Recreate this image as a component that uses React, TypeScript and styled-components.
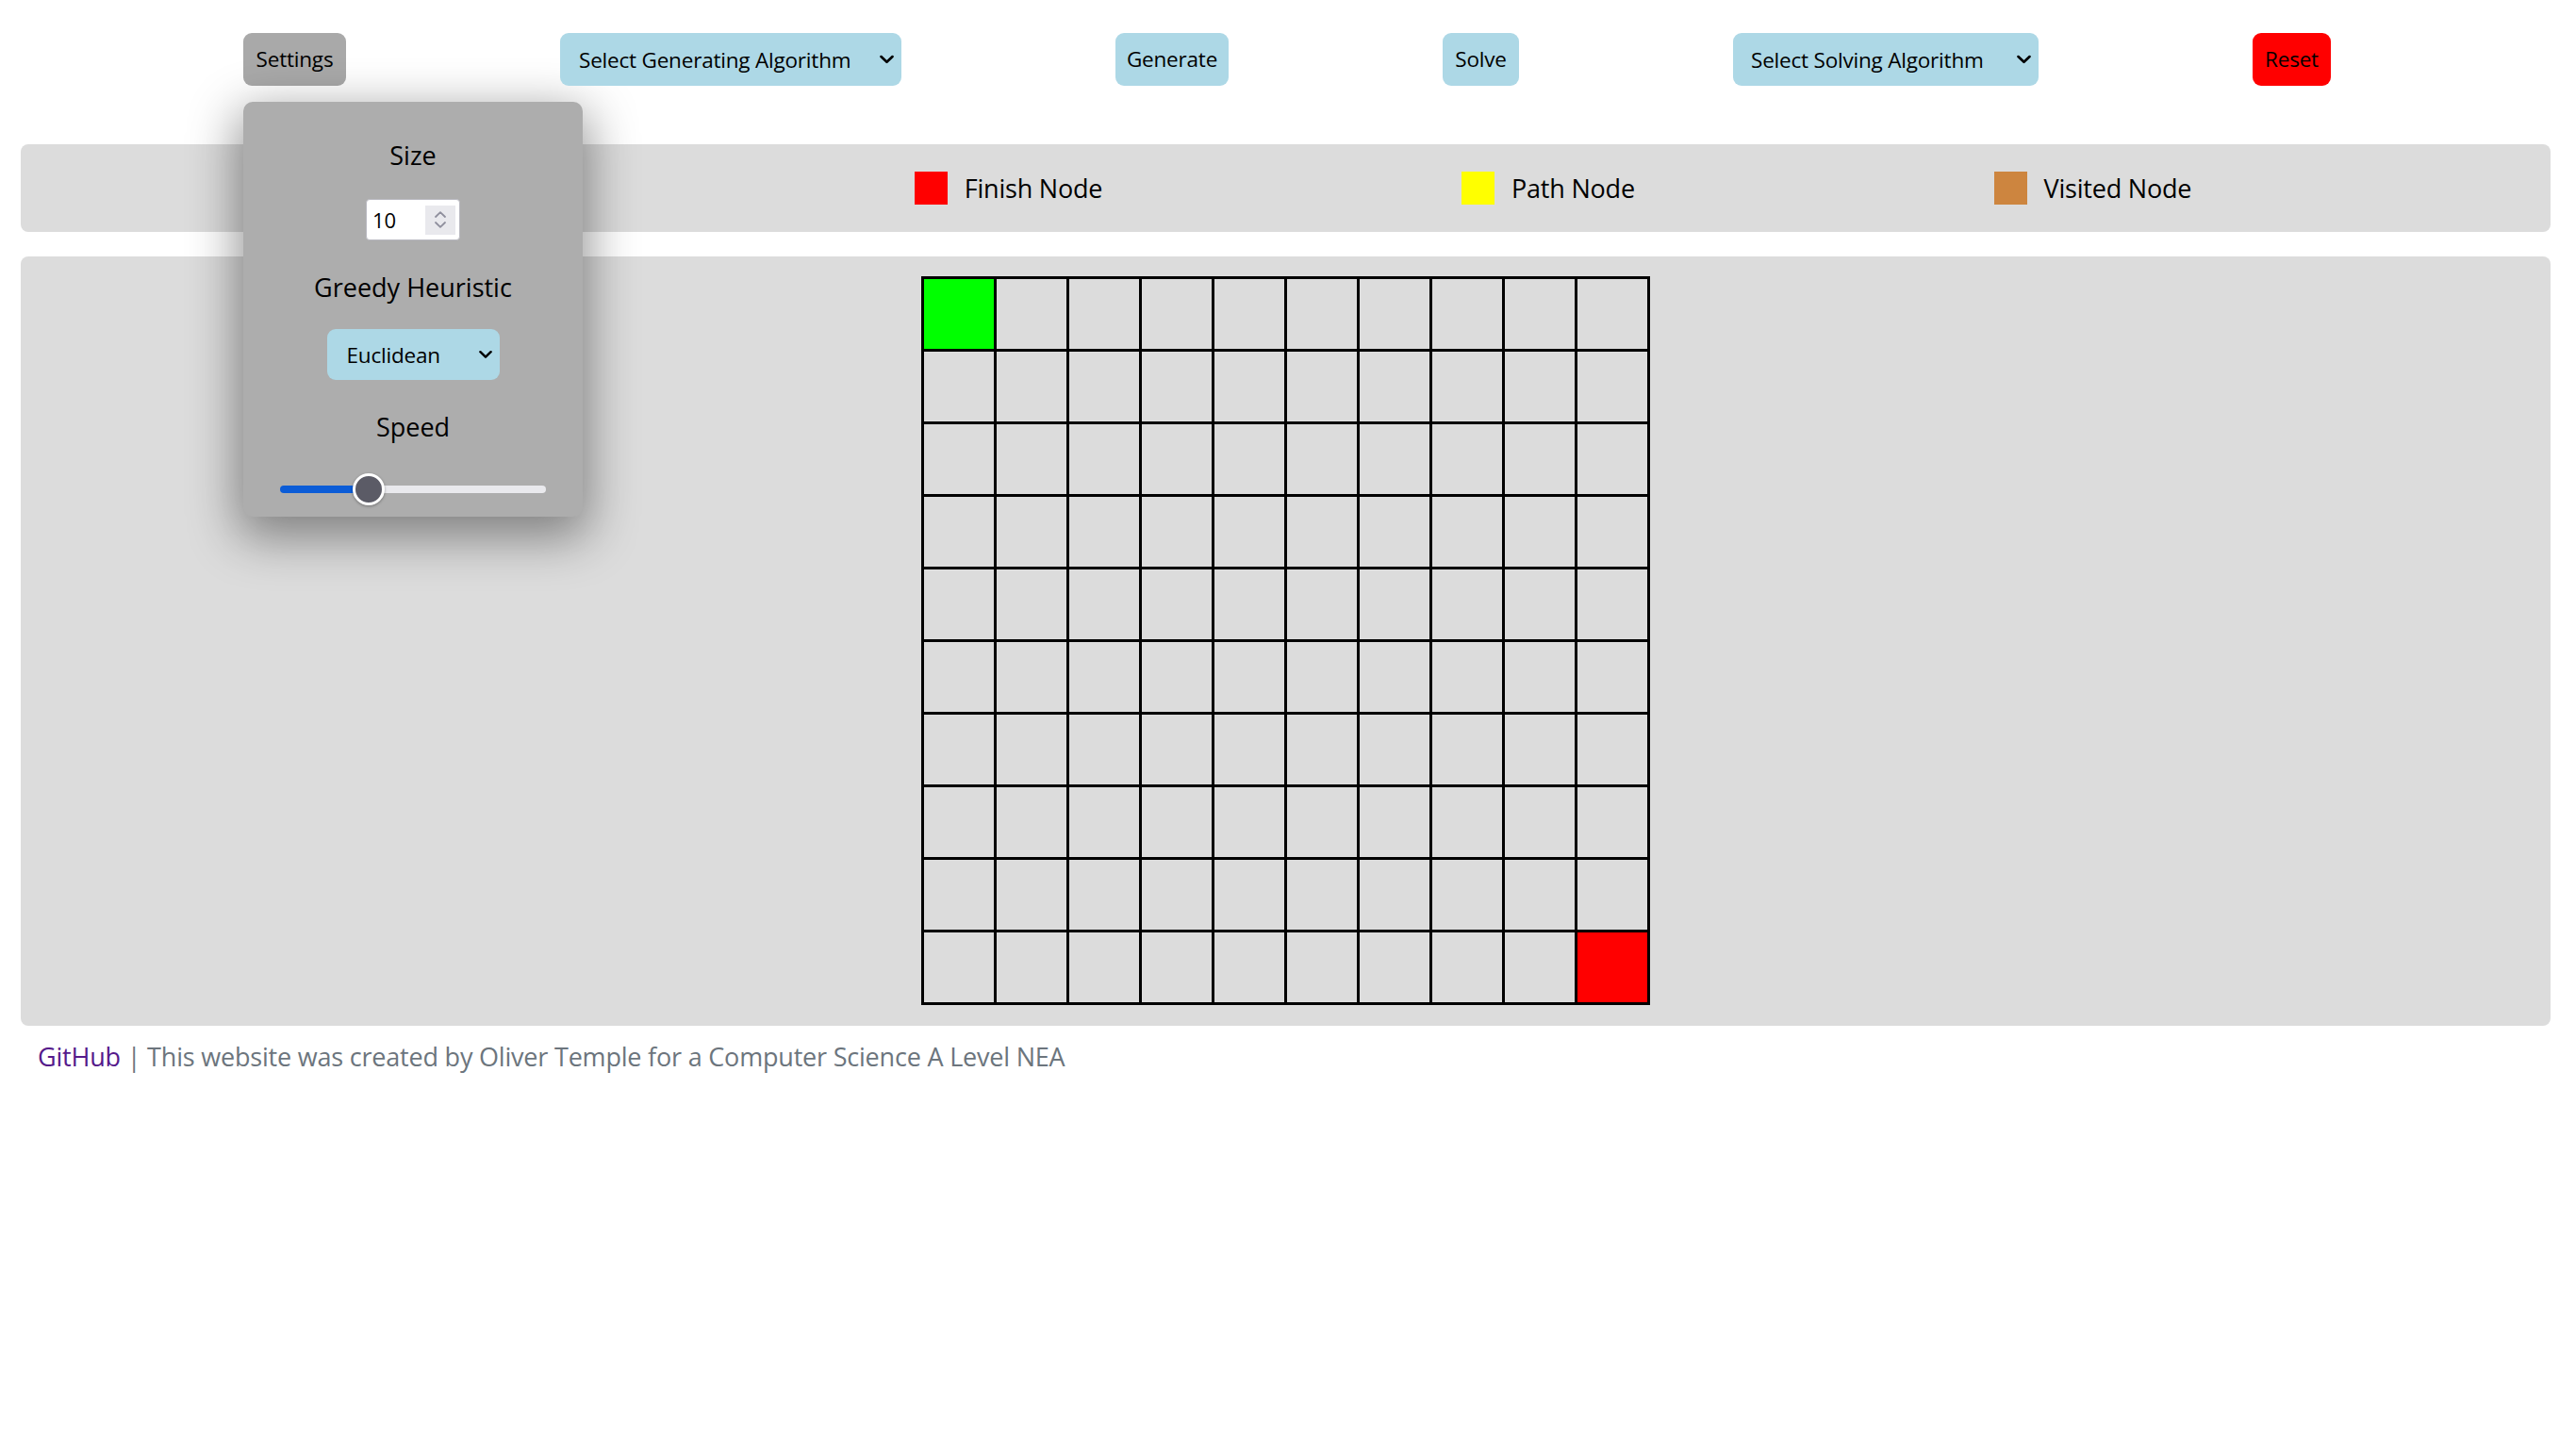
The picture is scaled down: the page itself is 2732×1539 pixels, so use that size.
import React from "react";
import styled, { createGlobalStyle } from "styled-components";

const GlobalStyle = createGlobalStyle`
  html, body { margin: 0; padding: 0; background: #ffffff; }
  body { font-family: "Open Sans", "Noto Sans", sans-serif; color: #000; }
  * { box-sizing: border-box; }
`;

const Page = styled.div`
  display: flex;
  flex-direction: column;
  width: 100%;
`;

const Toolbar = styled.div`
  display: flex;
  align-items: flex-start;
  gap: 227px;
  padding: 35px 0 0 258px;
  height: 153px;
  position: relative;
  z-index: 5;
`;

const Button = styled.button<{ $bg: string; $w: number }>`
  width: ${(p) => p.$w}px;
  height: 56px;
  padding: 0;
  border: none;
  border-radius: 9px;
  background: ${(p) => p.$bg};
  color: #000;
  font-family: "Open Sans", "Noto Sans", sans-serif;
  font-size: 22.5px;
  letter-spacing: -0.2px;
  line-height: 56px;
  text-align: center;
  cursor: pointer;
`;

const SettingsWrap = styled.div`
  position: relative;
`;

const Popup = styled.div`
  position: absolute;
  top: 73px;
  left: 0;
  width: 360px;
  height: 440px;
  background: #adadad;
  border-radius: 10px;
  box-shadow: 0px 16px 52px 6px rgba(0, 0, 0, 0.42);
  display: flex;
  flex-direction: column;
  align-items: center;
  padding-top: 37px;
`;

const PopupLabel = styled.div<{ $mt: number }>`
  margin-top: ${(p) => p.$mt}px;
  font-size: 27px;
  line-height: 40px;
  color: #000;
  white-space: nowrap;
`;

const NumberBox = styled.div`
  margin-top: 26px;
  width: 100px;
  height: 44px;
  background: #ffffff;
  border: 1px solid #b8b8c0;
  border-radius: 4px;
  display: flex;
  align-items: center;
  padding: 0 4px 0 6px;
`;

const NumberInput = styled.input`
  flex: 1;
  min-width: 0;
  border: none;
  outline: none;
  background: transparent;
  font-family: "Open Sans", "Noto Sans", sans-serif;
  font-size: 22px;
  color: #000;
  padding: 0;
  -moz-appearance: textfield;
  &::-webkit-inner-spin-button,
  &::-webkit-outer-spin-button {
    -webkit-appearance: none;
    margin: 0;
  }
`;

const Spinner = styled.div`
  width: 32px;
  height: 31px;
  background: #e9e9ed;
  display: flex;
  flex-direction: column;
  align-items: center;
  justify-content: center;
  gap: 4px;
`;

const SelectWrap = styled.div<{ $w: number; $mt?: number }>`
  position: relative;
  width: ${(p) => p.$w}px;
  margin-top: ${(p) => p.$mt ?? 0}px;
`;

const Select = styled.select<{ $h: number; $pl: number }>`
  appearance: none;
  -webkit-appearance: none;
  display: block;
  width: 100%;
  height: ${(p) => p.$h}px;
  border: none;
  border-radius: 9px;
  background: #add8e6;
  color: #000;
  font-family: "Open Sans", "Noto Sans", sans-serif;
  font-size: 22.5px;
  letter-spacing: -0.2px;
  padding: 0 30px 0 ${(p) => p.$pl}px;
  outline: none;
`;

const Chevron = styled.svg`
  position: absolute;
  right: 8px;
  top: 50%;
  transform: translateY(-50%);
  pointer-events: none;
`;

const Range = styled.input`
  -webkit-appearance: none;
  appearance: none;
  margin: 29px 0 0 0;
  width: 282px;
  height: 34px;
  background: transparent;
  &::-webkit-slider-runnable-track {
    height: 8px;
    border-radius: 4px;
    background: linear-gradient(
      to right,
      #0b5cd7 0,
      #0b5cd7 var(--fill),
      #e9e9ed var(--fill),
      #e9e9ed 100%
    );
  }
  &::-webkit-slider-thumb {
    -webkit-appearance: none;
    box-sizing: border-box;
    width: 34px;
    height: 34px;
    margin-top: -13px;
    border-radius: 50%;
    background: #5b5b66;
    border: 3px solid #ffffff;
    box-shadow: 0 1px 3px rgba(0, 0, 0, 0.35);
  }
`;

const Legend = styled.div`
  margin: 0 27px 0 22px;
  height: 93px;
  background: #dcdcdc;
  border-radius: 8px;
  display: flex;
  align-items: center;
  justify-content: space-evenly;
`;

const LegendItem = styled.div`
  display: flex;
  align-items: center;
  gap: 18px;
`;

const Swatch = styled.div<{ $c: string }>`
  width: 35px;
  height: 35px;
  background: ${(p) => p.$c};
`;

const LegendText = styled.span`
  font-size: 27px;
  letter-spacing: -0.2px;
  line-height: 40px;
  color: #000;
`;

const Panel = styled.div`
  margin: 26px 27px 0 22px;
  background: #dcdcdc;
  border-radius: 8px;
  padding: 21px 0 22px 0;
  display: flex;
  justify-content: center;
`;

const Grid = styled.div`
  display: grid;
  grid-template-columns: repeat(10, 74px);
  grid-auto-rows: 74px;
  gap: 3px;
  padding: 3px;
  background: #000;
`;

const Cell = styled.div<{ $c: string }>`
  background: ${(p) => p.$c};
`;

const Footer = styled.div`
  margin: 13px 22px 0 22px;
  padding: 0 18px;
  font-size: 27px;
  letter-spacing: -0.2px;
  line-height: 40px;
  color: #6c757d;
`;

const FooterLink = styled.a`
  color: #551a8b;
  text-decoration: none;
`;

const ChevronDown = ({ w = 15, h = 9 }: { w?: number; h?: number }) => (
  <Chevron width={w} height={h} viewBox="0 0 15 9">
    <path d="M1.5 1.5 L7.5 7.3 L13.5 1.5" fill="none" stroke="#000" strokeWidth="2.6" strokeLinecap="round" strokeLinejoin="round" />
  </Chevron>
);

const SpinArrow = ({ up }: { up: boolean }) => (
  <svg width="12" height="7" viewBox="0 0 12 7">
    <path
      d={up ? "M1 6 L6 1.2 L11 6" : "M1 1 L6 5.8 L11 1"}
      fill="none"
      stroke="#8f8f9d"
      strokeWidth="1.8"
      strokeLinecap="round"
      strokeLinejoin="round"
    />
  </svg>
);

const SIZE = 10;

export default function App() {
  const speed = 31;
  const cells = [];
  for (let r = 0; r < SIZE; r++) {
    for (let c = 0; c < SIZE; c++) {
      let color = "#dcdcdc";
      if (r === 0 && c === 0) color = "#00ff00";
      if (r === SIZE - 1 && c === SIZE - 1) color = "#ff0000";
      cells.push(<Cell key={`${r}-${c}`} $c={color} />);
    }
  }
  const fill = ((17 + (speed / 100) * (282 - 34)) / 282) * 100;

  return (
    <Page>
      <GlobalStyle />
      <Toolbar>
        <SettingsWrap>
          <Button $bg="#a9a9a9" $w={109}>Settings</Button>
          <Popup>
            <PopupLabel $mt={0}>Size</PopupLabel>
            <NumberBox>
              <NumberInput type="number" defaultValue={10} min={5} max={50} />
              <Spinner>
                <SpinArrow up />
                <SpinArrow up={false} />
              </Spinner>
            </NumberBox>
            <PopupLabel $mt={30}>Greedy Heuristic</PopupLabel>
            <SelectWrap $w={183} $mt={24}>
              <Select $h={54} $pl={21} defaultValue="euclidean">
                <option value="euclidean">Euclidean</option>
                <option value="manhattan">Manhattan</option>
              </Select>
              <ChevronDown w={14} h={9} />
            </SelectWrap>
            <PopupLabel $mt={30}>Speed</PopupLabel>
            <Range
              type="range"
              min={0}
              max={100}
              defaultValue={speed}
              style={{ ["--fill" as string]: `${fill}%` } as React.CSSProperties}
            />
          </Popup>
        </SettingsWrap>
        <SelectWrap $w={362}>
          <Select $h={56} $pl={20} defaultValue="">
            <option value="">Select Generating Algorithm</option>
            <option value="dfs">Recursive Backtracker</option>
            <option value="prim">Prim's Algorithm</option>
          </Select>
          <ChevronDown />
        </SelectWrap>
        <Button $bg="#add8e6" $w={120}>Generate</Button>
        <Button $bg="#add8e6" $w={81}>Solve</Button>
        <SelectWrap $w={324}>
          <Select $h={56} $pl={19} defaultValue="">
            <option value="">Select Solving Algorithm</option>
            <option value="dijkstra">Dijkstra</option>
            <option value="astar">A*</option>
            <option value="greedy">Greedy</option>
          </Select>
          <ChevronDown />
        </SelectWrap>
        <Button $bg="#ff0000" $w={83}>Reset</Button>
      </Toolbar>

      <Legend>
        <LegendItem>
          <Swatch $c="#00ff00" />
          <LegendText>Start Node</LegendText>
        </LegendItem>
        <LegendItem>
          <Swatch $c="#ff0000" />
          <LegendText>Finish Node</LegendText>
        </LegendItem>
        <LegendItem>
          <Swatch $c="#ffff00" />
          <LegendText>Path Node</LegendText>
        </LegendItem>
        <LegendItem>
          <Swatch $c="#cd853f" />
          <LegendText>Visited Node</LegendText>
        </LegendItem>
      </Legend>

      <Panel>
        <Grid>{cells}</Grid>
      </Panel>

      <Footer>
        <FooterLink href="#">GitHub</FooterLink> | This website was created by Oliver Temple for a Computer Science A Level NEA
      </Footer>
    </Page>
  );
}
